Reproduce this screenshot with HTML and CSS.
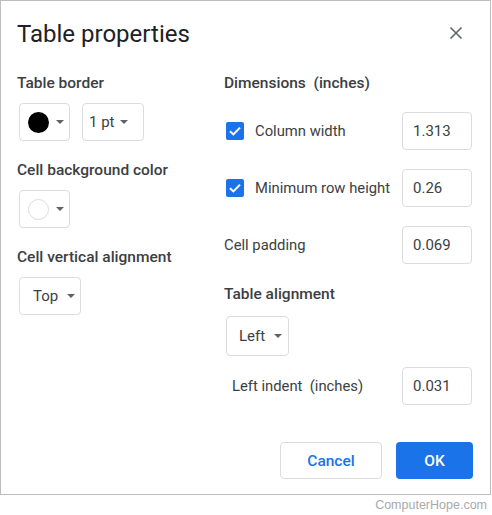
FILE: index.html
```html
<!DOCTYPE html>
<html lang="en">
<head>
    <meta charset="UTF-8">
    <meta name="viewport" content="width=device-width, initial-scale=1.0">
    <title>Table properties</title>
    <link rel="stylesheet" href="styles.css">
</head>
<body>
    <div class="dialog">
        <div class="dialog-header">
            <h1 class="dialog-title">Table properties</h1>
            <button class="close-btn" aria-label="Close">
                <svg width="14" height="14" viewBox="0 0 14 14">
                    <path d="M1.5 1.5 L12.5 12.5 M12.5 1.5 L1.5 12.5" stroke="#5f6368" stroke-width="1.6" fill="none"/>
                </svg>
            </button>
        </div>

        <div class="dialog-body">
            <!-- left column: border / background / vertical alignment -->
            <div class="col col-left">
                <div class="section-label">Table border</div>
                <div class="select-row">
                    <button class="select select-color">
                        <span class="swatch swatch-black"></span>
                        <span class="caret"></span>
                    </button>
                    <button class="select select-pt">
                        <span>1 pt</span>
                        <span class="caret"></span>
                    </button>
                </div>

                <div class="section-label gap-top">Cell background color</div>
                <div class="select-row">
                    <button class="select select-color">
                        <span class="swatch swatch-white"></span>
                        <span class="caret"></span>
                    </button>
                </div>

                <div class="section-label gap-top">Cell vertical alignment</div>
                <div class="select-row">
                    <button class="select select-text">
                        <span>Top</span>
                        <span class="caret"></span>
                    </button>
                </div>
            </div>

            <!-- right column: dimensions and table alignment -->
            <div class="col col-right">
                <div class="section-label">Dimensions&nbsp;&nbsp;(inches)</div>

                <div class="field-row first">
                    <label class="field-label">
                        <span class="checkbox">
                            <svg width="18" height="18" viewBox="0 0 18 18">
                                <path d="M4 9.2 L7.4 12.4 L14 5.6" stroke="#fff" stroke-width="2" fill="none"/>
                            </svg>
                        </span>
                        Column width
                    </label>
                    <input class="num-input" type="text" value="1.313">
                </div>

                <div class="field-row">
                    <label class="field-label">
                        <span class="checkbox">
                            <svg width="18" height="18" viewBox="0 0 18 18">
                                <path d="M4 9.2 L7.4 12.4 L14 5.6" stroke="#fff" stroke-width="2" fill="none"/>
                            </svg>
                        </span>
                        Minimum row height
                    </label>
                    <input class="num-input" type="text" value="0.26">
                </div>

                <div class="field-row">
                    <label class="field-label">Cell padding</label>
                    <input class="num-input" type="text" value="0.069">
                </div>

                <div class="section-label align-label">Table alignment</div>
                <div class="select-row align-select">
                    <button class="select select-text select-left">
                        <span>Left</span>
                        <span class="caret"></span>
                    </button>
                </div>

                <div class="field-row indent-row">
                    <label class="field-label indent-label">Left indent&nbsp;&nbsp;(inches)</label>
                    <input class="num-input" type="text" value="0.031">
                </div>
            </div>
        </div>

        <div class="dialog-footer">
            <button class="btn btn-cancel">Cancel</button>
            <button class="btn btn-ok">OK</button>
        </div>
    </div>
    <div class="credit">ComputerHope.com</div>
</body>
</html>
```

FILE: styles.css
```css
body {
    margin: 0;
    background: #fff;
    font-family: Roboto, "Liberation Sans", sans-serif;
    color: #3c4043;
}

button, input {
    font-family: inherit;
}

.dialog {
    width: 491px;
    height: 495px;
    box-sizing: border-box;
    border: 1px solid #bdbdbd;
    padding: 0 17px 0 16px;
    display: flex;
    flex-direction: column;
}

.dialog-header {
    display: flex;
    justify-content: space-between;
    align-items: center;
    padding-top: 19px;
    height: 28px;
}

.dialog-title {
    margin: 0;
    font-size: 24px;
    font-weight: 400;
    line-height: 28px;
    color: #202124;
}

.close-btn {
    border: none;
    background: none;
    padding: 0;
    width: 14px;
    height: 14px;
    margin-right: 10px;
    margin-top: -2px;
}

.dialog-body {
    display: flex;
    margin-top: 25px;
}

.col-left {
    width: 207px;
}

.col-right {
    flex: 1;
}

/* headings above each group */
.section-label {
    font-size: 15.5px;
    font-weight: 500;
    line-height: 20px;
    color: #3c4043;
}

.section-label.gap-top {
    margin-top: 19px;
}

.select-row {
    display: flex;
    gap: 12px;
    margin-top: 10px;
    margin-left: 2px;
}

.select {
    height: 38px;
    box-sizing: border-box;
    border: 1px solid #dadce0;
    border-radius: 4px;
    background: #fff;
    display: flex;
    align-items: center;
    padding: 0;
    font-size: 15px;
    color: #3c4043;
}

.select-color {
    width: 51px;
    padding-left: 8px;
    gap: 7px;
}

.select-pt {
    width: 62px;
    padding-left: 6px;
    gap: 6px;
}

.select-text {
    width: 62px;
    padding-left: 13px;
    gap: 9px;
}

.select-left {
    width: 63px;
    height: 40px;
    padding-left: 12px;
}

.caret {
    width: 0;
    height: 0;
    border-left: 4px solid transparent;
    border-right: 4px solid transparent;
    border-top: 4px solid #5f6368;
}

.swatch {
    width: 21px;
    height: 21px;
    border-radius: 50%;
    box-sizing: border-box;
}

.swatch-black {
    background: #000;
}

.swatch-white {
    background: #fff;
    border: 1px solid #dadce0;
}

/* label + number input rows */
.field-row {
    display: flex;
    justify-content: space-between;
    align-items: center;
    margin-top: 19px;
    margin-right: 1px;
}

.field-label {
    display: flex;
    align-items: center;
    font-size: 14.8px;
    color: #3c4043;
}

.checkbox {
    width: 18px;
    height: 18px;
    border-radius: 2px;
    background: #1a73e8;
    margin-left: 2px;
    margin-right: 11px;
    display: flex;
}

.num-input {
    width: 70px;
    height: 38px;
    box-sizing: border-box;
    border: 1px solid #dadce0;
    border-radius: 4px;
    padding: 0 0 0 10px;
    font-size: 15px;
    color: #3c4043;
    outline: none;
}

.align-label {
    margin-top: 20px;
}

.align-select {
    margin-top: 12px;
}

.indent-row {
    margin-top: 11px;
}

.indent-label {
    margin-left: 8px;
}

.dialog-footer {
    margin-top: auto;
    display: flex;
    justify-content: flex-end;
    gap: 14px;
    padding-bottom: 15px;
}

.btn {
    height: 37px;
    border-radius: 4px;
    font-size: 15.5px;
    font-weight: 500;
}

.btn-cancel {
    width: 102px;
    border: 1px solid #dadce0;
    background: #fff;
    color: #1a73e8;
}

.btn-ok {
    width: 77px;
    border: none;
    background: #1a73e8;
    color: #fff;
}

.credit {
    width: 487px;
    text-align: right;
    font-family: "Liberation Sans", Arial, sans-serif;
    font-size: 12.5px;
    color: #aaaaaa;
    margin-top: 3px;
}
```
